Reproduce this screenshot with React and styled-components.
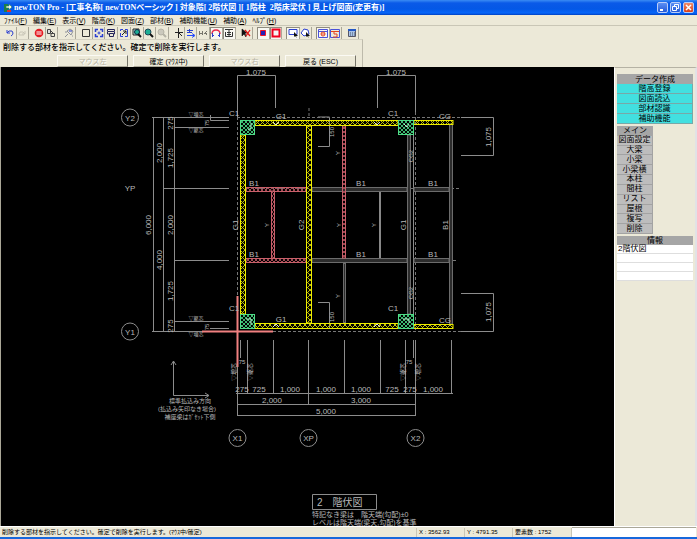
import React from "react";
import styled, { createGlobalStyle, css } from "styled-components";

const face = "#ece9d8";
const sans = '"Liberation Sans", "Noto Sans CJK JP", sans-serif';

const Global = createGlobalStyle`
  * { box-sizing: border-box; }
  body { margin: 0; background: ${face}; font-family: ${sans}; color: #000; }
  button, input { font-family: inherit; margin: 0; padding: 0; border-radius: 0; }
`;

const Window = styled.div`
  display: flex;
  flex-direction: column;
  min-height: 100vh;
  background: ${face};
  border-bottom: 2px solid #1768dc;
`;

const TitleBar = styled.header`
  display: flex;
  align-items: center;
  height: 15px;
  padding: 0 2px 0 3px;
  gap: 2px;
  background: linear-gradient(#3a8cf4 0, #0a5ae8 3px, #0458e6 9px, #0666fa 13px, #0040c0 15px);
`;

const Title = styled.h1`
  flex: 1;
  margin: 0;
  overflow: hidden;
  color: #fff;
  font: bold 8px/12px "Liberation Serif", "Noto Sans CJK JP", serif;
  font-feature-settings: "palt";
  white-space: pre;
`;

const WinButton = styled.button`
  display: flex;
  width: 11px;
  height: 11px;
  margin-right: ${(p) => (p.$close ? 1 : 0)}px;
  border: 1px solid #b9cdf8;
  border-radius: 2px;
  background: ${(p) => (p.$close ? "linear-gradient(#f08a68, #dc4018)" : "linear-gradient(#5c90f4, #245ad8)")};
`;

const MenuBar = styled.nav`
  display: flex;
  align-items: center;
  height: 11px;
  padding-left: 4px;
  gap: 6px;
  border-bottom: 1px solid #c9c6b6;
`;

const MenuItem = styled.button`
  border: 0;
  background: none;
  font-size: 7px;
  line-height: 9px;
  font-feature-settings: "palt";
  white-space: nowrap;
  u { text-underline-offset: 1px; }
`;

const Toolbar = styled.div`
  display: flex;
  align-items: center;
  gap: 4px;
  height: 13px;
  padding-left: 4px;
`;

const ToolGroup = styled.div`
  display: flex;
  width: ${(p) => p.$width}px;
  height: 12px;
`;

const ToolButton = styled.button`
  display: flex;
  flex: 1;
  align-items: center;
  justify-content: center;
  border: 0;
  border-right: 1px solid #aaa798;
  background: ${(p) => (p.$pressed ? "#f8f7f1" : face)};
  ${(p) => p.$pressed && css`border-top: 1px solid #8f8c7e; border-left: 1px solid #8f8c7e;`}
`;

const Prompt = styled.section`
  width: 363px;
  height: 28px;
  border-top: 1px solid #d4d1c2;
  border-right: 1px solid #bdbaab;
`;

const PromptText = styled.p`
  height: 15px;
  margin: 0;
  padding-left: 3px;
  font-size: 8px;
  line-height: 15px;
  font-weight: 500;
  white-space: nowrap;
`;

const PromptKeys = styled.div`
  display: flex;
  gap: 5px;
  padding-left: 57px;
`;

const KeyButton = styled.button`
  width: 71px;
  height: 12px;
  border: 1px solid #fbfaf4;
  border-right: 1px solid #77756a;
  border-bottom: 1px solid #aaa798;
  background: ${face};
  color: #000;
  font-size: 7px;
  line-height: 9px;
  &:disabled { color: #b5b2a4; text-shadow: 1px 1px #fff; }
`;

const Main = styled.main`
  display: flex;
  flex: 1;
`;

const Canvas = styled.div`
  flex: 1;
  min-width: 0;
  background: #000;
  border-left: 1px solid #aaa798;
  svg { display: block; width: 100%; height: auto; }
`;

const Side = styled.aside`
  display: flex;
  flex-direction: column;
  flex: 0 0 83px;
  gap: 2px;
  padding: 6px 2px 0 2px;
  border-top: 1px solid #b5b2a4;
  border-left: 1px solid #fff;
  border-right: 2px solid #e2e2e6;
`;

const Stack = styled.div`
  display: grid;
  grid-auto-rows: 1fr;
  width: ${(p) => p.$width};
  height: ${(p) => p.$height}px;
`;

const tones = { gray: "#a6a6a6", cyan: "#42e0e0", silver: "#bdbdbd" };

const StackHead = styled.h2`
  display: flex;
  align-items: center;
  justify-content: center;
  margin: 0;
  background: ${tones.gray};
  font-size: 8px;
  line-height: 9px;
  font-weight: 400;
`;

const StackButton = styled.button`
  border: 0;
  border-bottom: 1px solid ${(p) => (p.$tone === "cyan" ? "#78a8a8" : "#a3a3a3")};
  border-right: 1px solid ${(p) => (p.$tone === "cyan" ? "#78a8a8" : "#a3a3a3")};
  background: ${(p) => tones[p.$tone]};
  font-size: 8px;
  line-height: 8px;
  white-space: nowrap;
`;

const InfoList = styled.ul`
  margin: 0;
  padding: 0;
  list-style: none;
  background: #fff;
`;

const InfoRow = styled.li`
  height: 9px;
  padding-left: 1px;
  border-bottom: 1px solid #dedede;
  font-size: 8px;
  line-height: 8px;
`;

const StatusBar = styled.footer`
  display: flex;
  align-items: center;
  height: 11px;
  border-top: 1px solid #fff;
  font-size: ${(p) => p.$size}px;
  line-height: 9px;
  white-space: nowrap;
`;

const StatusText = styled.span`
  flex: ${(p) => (p.$width ? `0 0 ${p.$width}px` : "1")};
  padding-left: 2px;
  border-right: 1px solid #c9c6b6;
`;

const StatusInput = styled.input`
  flex: 0 0 124px;
  height: 10px;
  margin-right: 1px;
  border: 0;
  border-top: 1px solid #aaa798;
  background: #fff;
  font-size: 7px;
`;

const blue = "#2a3fd0";
const glyphs = {
  undo: <path d="M2 2v3h3M2 5l2-2q4-1 4 2q0 2-2 3" fill="none" stroke={blue} />,
  redo: <path d="M8 3v3H5M8 6L6 4q-4-1-4 2v1h5" fill="none" stroke="#c8c5b6" />,
  stop: <g><circle cx="5" cy="5" r="4.3" fill="#e51c23" /><path d="M2 4h6M2 6h6M4 3v4M6 3v4" stroke="#fff" strokeWidth=".6" /></g>,
  copy: <g fill="none" stroke="#444"><path d="M1.500 1.500h3v4h-3z" fill="#ddd" /><path d="M5 5.500h3.500v3H5zM5 3l2 2" /></g>,
  pick: <g fill="none" stroke="#8d9098"><path d="M1 9l3-3M3 3l4 4 2-4-3-2zM1 4h2M8 8h1" /><path d="M5 3h3" stroke={blue} /></g>,
  rect: <path d="M1.500 1.500h7v7h-7z" fill="none" stroke="#333" />,
  fit: <g fill="none" stroke={blue}><path d="M1.500 4V1.500H4M6 1.500h2.500V4M8.500 6v2.500H6M4 8.500H1.500V6" strokeWidth="1.500" /><path d="M3.500 5h3M5 3.500v3" /></g>,
  layers: <g fill="none" stroke="#24245c"><path d="M1.500 1.500h7v2h-7zM3.500 5.500h4v3h-4zM1.500 4v2h2M8.500 4v2h-1" /></g>,
  refresh: <g fill="none" stroke={blue}><path d="M1.500 3V1.500H4M6 1.500h2.500v7H6M4 8.500H1.500V5" /><path d="M3 7l4-4M4 3h3v3" stroke="#222" /></g>,
  zoomArea: <g><path d="M1 1h6v6H1z" fill="#bfe9df" stroke="#222" /><circle cx="5" cy="4" r="2.500" fill="#1cae94" stroke="#124" /><path d="M6 6l3 3" stroke="#111" strokeWidth="2" /></g>,
  zoom: <g><circle cx="4" cy="4" r="3" fill="#1cae94" stroke="#245" /><path d="M6 6l3 3" stroke="#111" strokeWidth="2" /></g>,
  zoomOff: <g><circle cx="4" cy="4" r="3" fill="#cbc9bd" stroke="#b5b3a6" /><path d="M6 6l3 3" stroke="#b5b3a6" strokeWidth="2" /></g>,
  cross: <path d="M4.500 0v10M1 4.500h8M5 5l3 3" stroke="#222" fill="none" />,
  abcLine: <g fill="none"><path d="M1 2.500h6M1 4.500h5M3.500 1v4" stroke={blue} /><path d="M1 7.500h7M6 5.500l3 2-3 2" stroke="#2348ff" /></g>,
  abc: <path d="M1.500 3v4M1 5.500h3M4.500 3v4M6 5.500h3M9 3L7 5l2 2" stroke="#77756c" fill="none" />,
  snap: <g fill="none"><path d="M1 6q0-4 4-4t4 4" stroke="#e82b4c" strokeWidth="1.400" /><path d="M1.500 5v4M8.500 5v4M1 7.500h2M7 7.500h2" stroke={blue} /></g>,
  plan: <path d="M1 1.500h8M1.500 4v4.500h7V4M5 2v6M3 4.500h4M3 6.500h4" stroke="#333" fill="none" />,
  noPick: <g fill="none"><path d="M1 1v7l2-2 2 3-1-4h2z" fill="#111" stroke="#111" strokeWidth=".6" /><path d="M4 2l5 6M9 2L5 8" stroke="#e01818" strokeWidth="1.300" /></g>,
  fill: <path d="M2.500 2.500h5v5h-5z" fill="#2521b4" stroke="#f0142a" />,
  frame: <path d="M1.500 1.500h7v7h-7z" fill="#f6f3f3" stroke="#f0001c" strokeWidth="2" />,
  selRect: <g><path d="M1 1.500h8v5H1z" fill="#fff" stroke={blue} /><path d="M6 4l4 4H8l1 2-2-2-1 1z" fill="#111" /></g>,
  selPoly: <g><path d="M1 5l3-4 4 1 1 4-5 2z" fill="#fff" stroke={blue} /><path d="M6 4l4 4H8l1 2-2-2-1 1z" fill="#111" /></g>,
  gridRed: <g fill="none"><path d="M.5 1.500h9v8h-9zM1 3.500h8" stroke="#4a52d8" /><circle cx="5" cy="6" r="2" stroke="#e8421c" /><path d="M3 6h4" stroke="#e8421c" /></g>,
  gridBack: <g fill="none"><path d="M.5 1.500h9v8h-9z" stroke="#4a52d8" /><path d="M1 3.500h8M4 3v3h3v3H3" stroke="#e8421c" /></g>,
  calc: <g><path d="M1.500 1.500h7v7h-7z" fill="#a9c2e6" stroke="#556" /><path d="M1 1h8v2H1z" fill="#2458c4" /><path d="M3 5h1M5 5h1M7 5h1M3 7h1M5 7h1M7 7h1" stroke="#456" /></g>,
};

const toolGroups = [
  { width: 25, tools: [["undo", "元に戻す"], ["redo", "やり直し"]] },
  { width: 25, tools: [["stop", "中止"], ["copy", "複写"]] },
  { width: 14, tools: [["pick", "属性取得"]] },
  { width: 89, tools: [["rect", "窓"], ["fit", "全体"], ["layers", "レイヤ"], ["refresh", "再表示"], ["zoomArea", "範囲拡大"], ["zoom", "拡大"], ["zoomOff", "前画面"]] },
  { width: 63, tools: [["cross", "交点"], ["abcLine", "線上"], ["abc", "文字"], ["snap", "吸着", true], ["plan", "図面", true]] },
  { width: 13, tools: [["noPick", "選択解除"]] },
  { width: 25, tools: [["fill", "塗り", true], ["frame", "枠", true]] },
  { width: 26, tools: [["selRect", "矩形選択", true], ["selPoly", "多角形選択"]] },
  { width: 26, tools: [["gridRed", "格子", true], ["gridBack", "格子戻し"]] },
  { width: 13, tools: [["calc", "電卓"]] },
];

const menus = [["ﾌｧｲﾙ", "F"], ["編集", "E"], ["表示", "V"], ["階高", "K"], ["図面", "Z"], ["部材", "B"], ["補助機能", "U"], ["補助", "A"], ["ﾍﾙﾌﾟ", "H"]];

const Drawing = styled.svg`
  font-family: ${sans};
  font-size: 8px;
  fill: #b8b8b8;
  text-anchor: middle;
`;
const Line = styled.path`
  fill: none;
  stroke: ${(p) => p.$color || "#8c8c8c"};
  stroke-width: ${(p) => p.$weight || 1};
  stroke-dasharray: ${(p) => (p.$dashed ? "3 2" : "none")};
`;
const Small = styled.text`
  font-size: ${(p) => p.$size || 6}px;
  text-anchor: ${(p) => (p.$left ? "start" : "middle")};
`;

const Turned = ({ x, y, children, size = 8 }) => (
  <Small $size={size} transform={`translate(${x} ${y}) rotate(-90)`}>{children}</Small>
);

const Beam = ({ x, y, w, h, kind }) => {
  const stroke = { yellow: "#eeee00", red: "#c8606a", green: "#4fdc86", gray: "#6c6c6c" }[kind];
  return <rect x={x} y={y} width={w} height={h} fill={`url(#hatch-${kind})`} stroke={stroke} strokeWidth="1" />;
};

const yellow = [[255, 120.5, 143, 5], [414, 120.5, 39, 4], [240.5, 135, 5, 179], [306.5, 126, 5, 197], [255, 323.5, 143, 5], [414, 324.5, 39, 4]];
const red = [[246, 187.5, 60, 4], [246, 258.5, 60, 4], [271.5, 191, 3, 67], [342.5, 126, 3, 132]];
const gray = [[312, 187.5, 95, 4], [414, 187.5, 35, 4], [312, 258.5, 95, 4], [414, 258.5, 35, 4], [343.5, 263, 2, 60], [407.5, 135, 3, 179], [449.5, 124, 3, 200]];
const green = [[240.5, 120.5, 14, 14], [398.5, 120.5, 15, 14], [240.5, 314.5, 14, 14], [398.5, 314.5, 15, 14]];

const labels = [
  [256, 75, "1,075"], [396, 75, "1,075"], [234, 116, "C1"], [281, 119, "G1"], [393, 116, "C1"], [445, 119, "CG"],
  [254, 186, "B1"], [361, 186, "B1"], [433, 186, "B1"], [254, 257, "B1"], [361, 257, "B1"], [433, 257, "B1"],
  [234, 311, "C1"], [393, 311, "C1"], [281, 322, "G1"], [445, 323, "CG"],
  [242, 392, "275"], [259, 392, "725"], [290, 392, "1,000"], [326, 392, "1,000"], [361, 392, "1,000"], [392, 392, "725"], [410, 392, "275"], [433, 392, "1,000"],
  [272, 403, "2,000"], [361, 403, "3,000"], [326, 414, "5,000"],
];
const turned = [
  [173, 123, "275"], [162, 153, "2,000"], [173, 158, "1,725"], [151, 225, "6,000"], [173, 225, "2,000"], [162, 260, "4,000"], [173, 291, "1,725"], [173, 326, "275"],
  [238, 225, "G1"], [304, 225, "G2"], [406, 225, "G1"], [448, 225, "B1"], [491, 137, "1,075"], [491, 312, "1,075"],
];
const turnedSmall = [
  [209, 123, "75"], [209, 327, "75"], [269, 225, "Y"], [341, 225, "Y"], [376, 225, "Y"], [340, 153, "Y"], [340, 296, "Y"],
  [334, 132, "150"], [334, 317, "150"], [413, 156, "CG2"], [413, 293, "CG2"],
  [236, 372, "▽増芯"], [252, 372, "▽躯芯"], [405, 372, "▽躯芯"], [420, 372, "▽増芯"],
];
const bubbles = [[130, 117.5, "Y2"], [130, 331.5, "Y1"], [237.5, 438, "X1"], [308.5, 438, "XP"], [415.5, 438, "X2"]];

const Hatch = ({ kind, color, size }) => (
  <pattern id={`hatch-${kind}`} width={size} height={size} patternUnits="userSpaceOnUse">
    <path d={`M0 0L${size} ${size}M${size} 0L0 ${size}`} stroke={color} strokeWidth="1" />
  </pattern>
);

const FloorPlan = () => (
  <Drawing viewBox="1 67 613 459" role="img" aria-label="2階伏図">
    <defs>
      <Hatch kind="yellow" color="#c4c400" size={5} />
      <Hatch kind="red" color="#a04852" size={4} />
      <Hatch kind="green" color="#3cb870" size={4} />
      <pattern id="hatch-gray" width="4" height="4" patternUnits="userSpaceOnUse"><path d="M0 0h4v4H0z" fill="#2c2c2c" /></pattern>
    </defs>
    <Line d="M153.5 117V332M163.5 117V332M174.5 117V332M152 117.5H229M210.5 115v5.5H229M175 127.5H229M164 188.5H229M175 260.5H229M175 321.5H229M210 328.5H229M152 331.5H204" />
    <Line d="M237.5 117V75.5H275.5V108M377.5 108V75.5H415.5V112M461 117.5H493.5V155.5H461M461 293.5H493.5V331.5H461M318 146.5H329.5V117H318M318 302.5H329.5V329" />
    <Line $dashed d="M237.5 117V331M415.5 112V331M237 117.5H461M273 331.5H461M309 108V117M246 188.5H460M408 260.5H456" $color="#777" />
    <Line d="M237.5 340V416M240.5 340V358M247.5 340V394M273.5 340V394M308.5 340V405M344.5 340V394M380.5 340V394M405.5 340V394M413.5 340V358M415.5 340V416M451.5 340V394M236 393.5H453M237 404.5H416M237 415.5H416" />
    <Line d="M380 189V260" $weight="2" $color="#888" />
    <Line d="M413.5 135V314" />
    {gray.map(([x, y, w, h]) => <Beam key={`${x}-${y}`} {...{ x, y, w, h }} kind="gray" />)}
    {red.map(([x, y, w, h]) => <Beam key={`${x}-${y}`} {...{ x, y, w, h }} kind="red" />)}
    {yellow.map(([x, y, w, h]) => <Beam key={`${x}-${y}`} {...{ x, y, w, h }} kind="yellow" />)}
    {green.map(([x, y, w, h]) => <Beam key={`${x}-${y}`} {...{ x, y, w, h }} kind="green" />)}
    <Line d="M251 123v5l-3 2M404 124l3 3 2-3M251 325v-6h-5M403 319h6v4" $color="#b8f0cc" />
    <Line d="M273 122l3 3 3-3M374 122l3 3 3-3M273 327l3-3 3 3M374 327l3-3 3 3" $color="#ddd" />
    <Line d="M202 331.5H273M237.5 296V367" $color="#f08080" $weight="2" />
    <Line d="M173.5 395.5V361M171 365l2.5-4 2.5 4M173.5 395.5H209M205 393l4 2.5-4 2.5" />
    {bubbles.map(([x, y, t]) => (
      <g key={t}>
        <circle cx={x} cy={y} r="8.5" fill="none" stroke="#8c8c8c" />
        <text x={x} y={y + 3}>{t}</text>
      </g>
    ))}
    <text x="130" y="191">YP</text>
    {labels.map(([x, y, t]) => <text key={`${x}-${y}`} x={x} y={y}>{t}</text>)}
    {turned.map(([x, y, t]) => <Turned key={`${x}-${y}`} x={x} y={y}>{t}</Turned>)}
    {turnedSmall.map(([x, y, t]) => <Turned key={`${x}-${y}`} x={x} y={y} size={6}>{t}</Turned>)}
    <Small $size={5} x="196" y="116">▽増芯</Small>
    <Small $size={5} x="196" y="132">▽躯芯</Small>
    <Small $size={5} x="196" y="320">▽躯芯</Small>
    <Small $size={5} x="196" y="336">▽増芯</Small>
    <Small x="242" y="364">75</Small>
    <Small x="409" y="364">75</Small>
    <Small x="190" y="403">標準払込み方向</Small>
    <Small x="187" y="411">(払込み矢印なき場合)</Small>
    <Small x="190" y="419">補座梁はｶﾞｾｯﾄ下側</Small>
    <path d="M312.500 494.500h64v15h-64z" fill="none" stroke="#8c8c8c" />
    <Small $size={10} $left x="317" y="506">2　階伏図</Small>
    <Small $size={7} $left x="312" y="517">特記なき梁は　階天端(勾配)±0</Small>
    <Small $size={7} $left x="312" y="525">レベルは階天端(梁天,勾配)を基準</Small>
  </Drawing>
);

export default function App() {
  return (
    <Window>
      <Global />
      <TitleBar>
        <svg width="9" height="10" viewBox="0 0 9 10" aria-hidden="true">
          <path d="M1 1h4v8H1z" fill="#1c7e4c" /><path d="M3 3h3V1l3 3-3 3V5H3z" fill="#f4f4e8" stroke="#27864a" strokeWidth=".6" /><path d="M4 7h4v2H4z" fill="#e23028" />
        </svg>
        <Title>newTON Pro - [工事名称[ newTONベーシック ] 対象階[ 2階伏図 ][ 1階柱  2階床梁伏 ] 見上げ図面(変更有)]</Title>
        <WinButton aria-label="最小化"><svg width="9" height="9"><path d="M2 7h3" stroke="#fff" strokeWidth="2" /></svg></WinButton>
        <WinButton aria-label="元に戻す"><svg width="9" height="9"><path d="M3.500 3V1.500h4v4H6M1.500 3.500h4v4h-4z" fill="none" stroke="#fff" /></svg></WinButton>
        <WinButton $close aria-label="閉じる"><svg width="9" height="9"><path d="M2 2l5 5M7 2L2 7" stroke="#fff" strokeWidth="1.500" /></svg></WinButton>
      </TitleBar>
      <MenuBar>
        {menus.map(([name, key]) => (
          <MenuItem key={name}>{name}(<u>{key}</u>)</MenuItem>
        ))}
      </MenuBar>
      <Toolbar role="toolbar">
        {toolGroups.map((group) => (
          <ToolGroup key={group.tools[0][0]} $width={group.width}>
            {group.tools.map(([icon, label, pressed]) => (
              <ToolButton key={icon} aria-label={label} $pressed={pressed}>
                <svg width="10" height="10" viewBox="0 0 10 10">{glyphs[icon]}</svg>
              </ToolButton>
            ))}
          </ToolGroup>
        ))}
      </Toolbar>
      <Prompt>
        <PromptText>削除する部材を指示してください。確定で削除を実行します。</PromptText>
        <PromptKeys>
          <KeyButton disabled>マウス左</KeyButton>
          <KeyButton>確定 (ﾏｳｽ中)</KeyButton>
          <KeyButton disabled>マウス右</KeyButton>
          <KeyButton>戻る (ESC)</KeyButton>
        </PromptKeys>
      </Prompt>
      <Main>
        <Canvas><FloorPlan /></Canvas>
        <Side>
          <Stack $width="100%" $height={50}>
            <StackHead>データ作成</StackHead>
            {["階高登録", "図面読込", "部材認識", "補助機能"].map((t) => <StackButton key={t} $tone="cyan">{t}</StackButton>)}
          </Stack>
          <Stack $width="36px" $height={108}>
            <StackHead>メイン</StackHead>
            {["図面設定", "大梁", "小梁", "小梁横", "本柱", "間柱", "リスト", "屋根", "複写", "削除"].map((t) => <StackButton key={t} $tone="silver">{t}</StackButton>)}
          </Stack>
          <div>
            <StackHead>情報</StackHead>
            <InfoList>
              <InfoRow>2階伏図</InfoRow>
              <InfoRow /><InfoRow /><InfoRow />
            </InfoList>
          </div>
        </Side>
      </Main>
      <StatusBar $size={6}>
        <StatusText>削除する部材を指示してください。確定で削除を実行します。(ﾏｳｽ中/確定)</StatusText>
        <StatusText $width={48}>X : 3562.93</StatusText>
        <StatusText $width={48}>Y : 4791.35</StatusText>
        <StatusText $width={59}>要素数 : 1752</StatusText>
        <StatusInput aria-label="入力" />
      </StatusBar>
    </Window>
  );
}
